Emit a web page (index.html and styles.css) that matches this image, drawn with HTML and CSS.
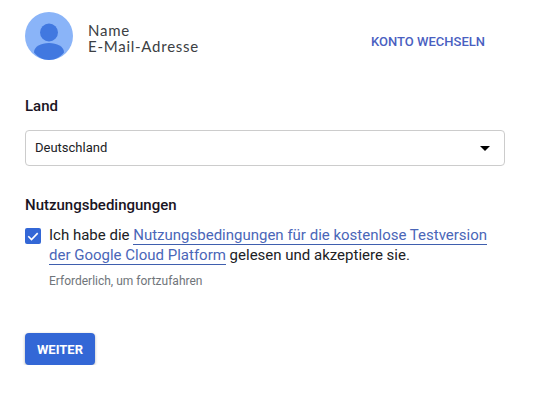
FILE: index.html
```html
<!DOCTYPE html>
<html lang="de">
<head>
    <meta charset="UTF-8">
    <meta name="viewport" content="width=device-width, initial-scale=1.0">
    <title>Konto</title>
    <link rel="stylesheet" href="styles.css">
</head>
<body>
    <div class="page">
        <div class="account">
            <svg class="avatar" width="48" height="48" viewBox="0 0 48 48">
                <circle cx="24" cy="24" r="24" fill="#8ab4f8"/>
                <circle cx="24" cy="20.5" r="9" fill="#4178e0"/>
                <path d="M9 40.5c0-6 7-9.500 15-9.500s15 3.500 15 9.500c-4 4.800-9 7.500-15 7.500s-11-2.700-15-7.500z" fill="#4178e0"/>
            </svg>
            <div class="account-text">
                <div>Name</div>
                <div>E-Mail-Adresse</div>
            </div>
            <a class="switch-link">KONTO WECHSELN</a>
        </div>

        <div class="section-title country-title">Land</div>
        <div class="select-box">
            <span>Deutschland</span>
            <span class="arrow"></span>
        </div>

        <div class="section-title terms-title">Nutzungsbedingungen</div>
        <div class="terms-row">
            <span class="checkbox">
                <svg width="16" height="16" viewBox="0 0 16 16">
                    <path d="M3.300 8.300l3.200 3.200 6.200-6.400" fill="none" stroke="#fff" stroke-width="1.600"/>
                </svg>
            </span>
            <div class="terms-text">Ich habe die <a class="terms-link">Nutzungsbedingungen für die kostenlose Testversion der Google Cloud Platform</a> gelesen und akzeptiere sie.</div>
        </div>
        <div class="hint">Erforderlich, um fortzufahren</div>

        <button class="next-btn">WEITER</button>
    </div>
</body>
</html>
```

FILE: styles.css
```css
body {
    margin: 0;
    background: #fff;
    font-family: Roboto, "Liberation Sans", sans-serif;
    color: #202124;
}
.page {
    width: 480px;
    padding: 12px 0 0 25px;
}
.account {
    display: flex;
    align-items: center;
    height: 48px;
}
.avatar {
    flex-shrink: 0;
}
.account-text {
    margin: 4px 0 0 15px;
    font-family: Lato, "Noto Sans", sans-serif;
    font-size: 15px;
    line-height: 16px;
    letter-spacing: 0.75px;
    color: #3c4043;
}
.switch-link {
    margin-left: auto;
    margin-right: 20px;
    margin-top: 10px;
    font-size: 13px;
    font-weight: 500;
    color: #4a5fc1;
}
.section-title {
    font-size: 15px;
    font-weight: 500;
    line-height: 20px;
    color: #1a1423;
}
.country-title {
    margin-top: 36px;
}
.select-box {
    display: flex;
    align-items: center;
    justify-content: space-between;
    box-sizing: border-box;
    height: 36px;
    margin-top: 14px;
    padding: 0 14px 2px 9px;
    border: 1px solid #ccc;
    border-radius: 4px;
    font-size: 13px;
    color: #202124;
}
.arrow {
    width: 0;
    height: 0;
    margin-top: 2px;
    border-left: 5px solid transparent;
    border-right: 5px solid transparent;
    border-top: 5px solid #000;
}
.terms-title {
    margin-top: 29px;
}
.terms-row {
    display: flex;
    margin-top: 10px;
}
.checkbox {
    display: flex;
    align-items: center;
    justify-content: center;
    flex-shrink: 0;
    width: 16px;
    height: 16px;
    margin-top: 3px;
    border-radius: 2px;
    background: #3367d6;
}
.terms-text {
    margin-left: 8px;
    width: 450px;
    font-size: 15px;
    line-height: 20px;
    color: #202124;
}
.terms-link {
    color: #4a66b8;
    border-bottom: 1px solid #3f5fae;
}
.hint {
    margin: 8px 0 0 24px;
    font-size: 12px;
    line-height: 16px;
    color: #70757a;
}
.next-btn {
    display: block;
    width: 70px;
    height: 32px;
    margin-top: 44px;
    padding: 0;
    border: none;
    border-radius: 4px;
    background: #3367d6;
    box-shadow: 0 1px 3px rgba(60, 64, 67, 0.4);
    font-family: Roboto, sans-serif;
    font-size: 13px;
    font-weight: 700;
    color: #fff;
}
```
